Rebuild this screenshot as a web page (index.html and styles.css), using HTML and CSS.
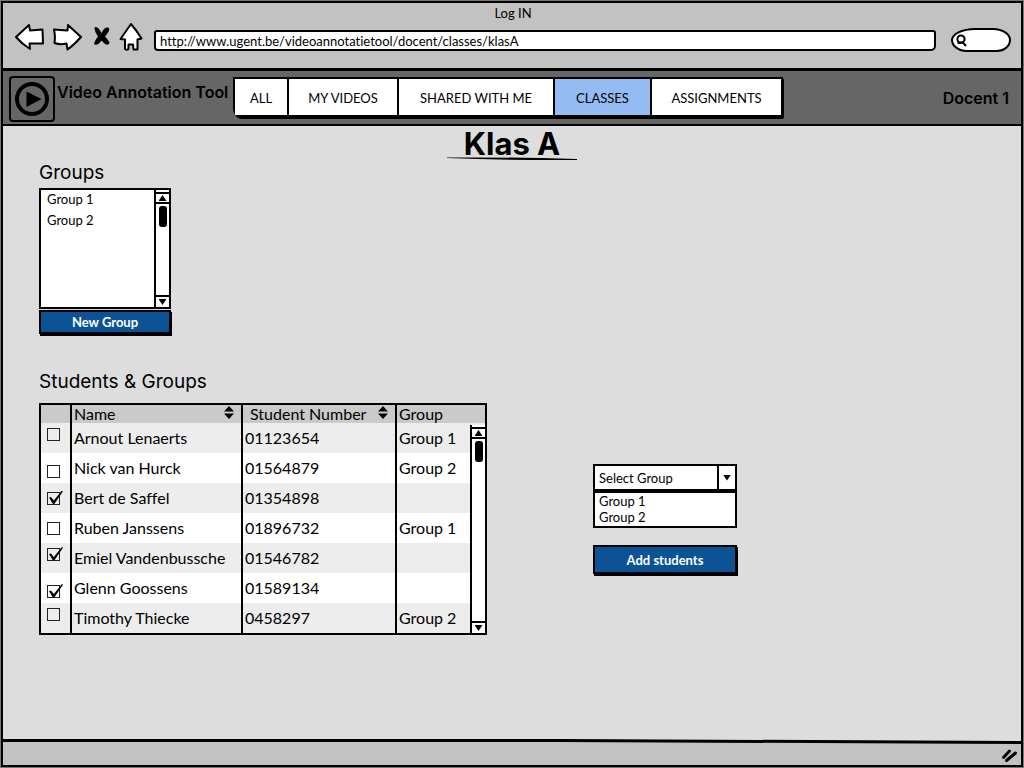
FILE: index.html
```html
<!DOCTYPE html>
<html lang="en">
<head>
<meta charset="utf-8">
<meta name="viewport" content="width=device-width, initial-scale=1">
<title>Log IN</title>
<link rel="stylesheet" href="styles.css">
</head>
<body>
<div class="window">
  <header class="chrome">
    <div class="chrome-title">Log IN</div>
    <div class="chrome-bar">
      <div class="chrome-buttons">
        <button type="button" aria-label="Back"><svg width="30" height="28" viewBox="0 0 30 28"><path d="M1 14 L14 2 L15 7.500 L27.500 6.500 L28 20.500 L14.500 20.500 L15 26 Q7 21 1 14Z"/></svg></button>
        <button type="button" aria-label="Forward"><svg width="30" height="28" viewBox="0 0 30 28"><path d="M28 14 L15 2 L14.500 7.500 L1 6.500 Q2.500 13 1.500 20 Q7 22 13.500 20.500 L14.500 26.500 Q21 22 28 14Z"/></svg></button>
        <button type="button" aria-label="Stop"><svg width="20" height="24" viewBox="0 0 20 24"><path class="cross" d="M4 2 Q7 1 10.500 8 Q14 1 18 3 Q19.500 5 14 11.500 Q19 17 18.500 18 Q17 21 14 19 L10.500 15.500 Q6.500 21 3.500 19.500 Q2 18 7 11.500 Q2 4 4 2Z"/></svg></button>
        <button type="button" aria-label="Home"><svg width="24" height="30" viewBox="0 0 24 30"><path d="M12 2 L1.500 17 L6 17.500 L6 27 Q8 28.500 9.500 27 L9.500 22.500 L14 22.500 L14.500 27.500 L18.500 27.500 L18.500 17.500 L22.500 16.500 Q18 9 12 2Z"/></svg></button>
      </div>
      <input class="address" type="text" aria-label="Address" value="http://www.ugent.be/videoannotatietool/docent/classes/klasA">
      <label class="search">
        <svg width="13" height="13" viewBox="0 0 13 13"><circle cx="6" cy="5" r="3.600"/><path d="M2.500 9 L8 8.500 L11 12"/></svg>
        <input type="search" aria-label="Search">
      </label>
    </div>
  </header>

  <div class="navbar">
    <svg class="logo" width="46" height="46" viewBox="0 0 46 46"><rect x="1" y="1" width="44" height="44" rx="3"/><circle cx="23" cy="23" r="15"/><path d="M17.500 15.500 L32.500 23 L17.500 31Z"/></svg>
    <div class="brand">Video Annotation Tool</div>
    <nav class="tabs">
      <a class="tab tab-all" href="#">ALL</a>
      <a class="tab tab-videos" href="#">MY VIDEOS</a>
      <a class="tab tab-shared" href="#">SHARED WITH ME</a>
      <a class="tab tab-classes active" href="#" aria-current="page">CLASSES</a>
      <a class="tab tab-assign" href="#">ASSIGNMENTS</a>
    </nav>
    <div class="user">Docent 1</div>
  </div>

  <main class="content">
    <div class="heading">
      <h1>Klas A</h1>
      <svg width="130" height="4" viewBox="0 0 130 4"><path d="M0 0.500 Q60 0 130 2 L130 3 Q60 3.500 0 1Z"/></svg>
    </div>

    <section class="groups">
      <h2><label for="groups">Groups</label></h2>
      <div class="listbox">
        <select id="groups" multiple size="5">
          <option>Group 1</option>
          <option>Group 2</option>
        </select>
        <div class="scroll"><span class="arrow"><i class="up"></i></span><span class="thumb"></span><span class="arrow end"><i class="down"></i></span></div>
      </div>
      <button class="btn" type="button">New Group</button>
    </section>

    <div class="columns">
      <section class="students">
        <h2>Students &amp; Groups</h2>
        <div class="grid-box">
          <table>
            <colgroup><col class="c-check"><col class="c-name"><col class="c-number"><col></colgroup>
            <thead>
              <tr>
                <th></th>
                <th><span class="sortable">Name <svg width="10" height="13" viewBox="0 0 10 13"><path d="M5 0 L10 5.500 L0 5.500Z M0 7.500 L10 7.500 L5 13Z"/></svg></span></th>
                <th><span class="sortable inset">Student Number <svg width="10" height="13" viewBox="0 0 10 13"><path d="M5 0 L10 5.500 L0 5.500Z M0 7.500 L10 7.500 L5 13Z"/></svg></span></th>
                <th>Group</th>
              </tr>
            </thead>
            <tbody>
              <tr><td class="high"><input type="checkbox" aria-label="Arnout Lenaerts"></td><td>Arnout Lenaerts</td><td>01123654</td><td>Group 1</td></tr>
              <tr><td class="low"><input type="checkbox" aria-label="Nick van Hurck"></td><td>Nick van Hurck</td><td>01564879</td><td>Group 2</td></tr>
              <tr><td><input type="checkbox" checked aria-label="Bert de Saffel"></td><td>Bert de Saffel</td><td>01354898</td><td></td></tr>
              <tr><td><input type="checkbox" aria-label="Ruben Janssens"></td><td>Ruben Janssens</td><td>01896732</td><td>Group 1</td></tr>
              <tr><td class="high"><input type="checkbox" checked aria-label="Emiel Vandenbussche"></td><td>Emiel Vandenbussche</td><td>01546782</td><td></td></tr>
              <tr><td class="low"><input type="checkbox" checked aria-label="Glenn Goossens"></td><td>Glenn Goossens</td><td>01589134</td><td></td></tr>
              <tr><td class="high"><input type="checkbox" aria-label="Timothy Thiecke"></td><td>Timothy Thiecke</td><td>0458297</td><td>Group 2</td></tr>
            </tbody>
          </table>
          <div class="scroll over"><span class="arrow"><i class="up"></i></span><span class="thumb"></span><span class="arrow end"><i class="down"></i></span></div>
        </div>
      </section>

      <section class="assign">
        <div class="combo">
          <select aria-label="Select Group"><option>Select Group</option></select>
          <span class="combo-arrow"><i class="down"></i></span>
        </div>
        <ul class="options" role="listbox" aria-label="Groups">
          <li role="option">Group 1</li>
          <li role="option">Group 2</li>
        </ul>
        <button class="btn large" type="button">Add students</button>
      </section>
    </div>
  </main>

  <footer class="status">
    <svg class="rule" height="5" viewBox="0 0 1018 5" preserveAspectRatio="none"><path class="below" d="M0 1 L560 1 L1018 4 L1018 5 L0 5Z"/><path class="ink" d="M0 0 L560 0 L1018 2 L1018 5 L560 3 L0 3Z"/></svg>
    <svg class="grip" width="18" height="15" viewBox="0 0 18 15"><path d="M2.500 9.500 L8.500 3 M5.500 12.500 L14.500 5"/></svg>
  </footer>
</div>
</body>
</html>
```

FILE: styles.css
```css
* { box-sizing: border-box; }

body {
  margin: 0;
  padding: 1px;
  background: #777;
  color: #000;
  font: 13px/16px Lato, "Open Sans", sans-serif;
  font-variant-ligatures: none;
}

button, input, select { font: inherit; font-variant-ligatures: none; color: inherit; margin: 0; }
svg { display: block; }

.window {
  display: flex;
  flex-direction: column;
  min-height: calc(100vh - 2px);
  border: 2px solid #000;
  background: #ddd;
}

/* Browser chrome */
.chrome {
  padding: 2px 10px 14px 12px;
  background: #c2c2c2;
  border-bottom: 3px solid #000;
}
.chrome-title { text-align: center; line-height: 17px; }
.chrome-bar { display: flex; align-items: center; height: 32px; }
.chrome-buttons { display: flex; align-items: center; gap: 8px; width: 139px; padding-bottom: 2px; }
.chrome-buttons button { padding: 0; border: 0; background: none; }
.chrome-buttons svg { fill: #fff; stroke: #000; stroke-width: 2; stroke-linejoin: round; }
.chrome-buttons .cross { fill: #000; stroke: none; }
.address {
  flex: 1;
  min-width: 0;
  height: 21px;
  margin: 5px 15px 0 0;
  padding: 0 4px;
  border: 2px solid #000;
  border-radius: 3px 3px 5px 4px;
  background: #fff;
}
.search {
  display: flex;
  align-items: center;
  width: 60px;
  height: 24px;
  margin-top: 4px;
  padding-left: 2px;
  border: 2px solid #000;
  border-radius: 24px 18px 14px 16px / 12px;
  background: #fff;
}
.search svg { flex: none; fill: none; stroke: #000; stroke-width: 2; }
.search input { width: 36px; padding: 0; border: 0; outline: 0; background: none; appearance: none; }

/* Navigation */
.navbar {
  display: flex;
  align-items: center;
  padding: 5px 12px 2px 6px;
  background: #666;
  border-bottom: 2px solid #000;
  font-family: Inter, Lato, sans-serif;
  font-size: 16px;
  font-weight: 600;
}
.logo { flex: none; fill: none; stroke: #000; stroke-width: 2; }
.logo circle { stroke-width: 4; }
.logo path { fill: #000; stroke: none; }
.brand { width: 178px; padding-left: 2px; margin-bottom: 14px; white-space: nowrap; }
.tabs {
  display: flex;
  margin-bottom: 4px;
  border: 2px solid #000;
  border-radius: 0 0 2px 8px;
  box-shadow: 1px 2px 0 #000;
  font-family: Lato, "Open Sans", sans-serif;
  font-size: 13px;
  font-weight: 400;
}
.tab {
  padding: 11px 0 9px;
  border-right: 2px solid #000;
  background: #fff;
  color: #000;
  text-align: center;
  text-decoration: none;
}
.tab:last-child { border-right: 0; }
.tab.active { background: #94bbf2; }
.tab-all { width: 54px; }
.tab-videos { width: 110px; }
.tab-shared { width: 156px; }
.tab-classes { width: 97px; }
.tab-assign { width: 129px; }
.user { margin: 0 0 3px auto; }

/* Page */
.content { flex: 1; padding: 0 36px; }
.heading { display: flex; flex-direction: column; align-items: center; }
h1, h2 { margin: 0; font-family: Inter, Lato, sans-serif; }
h1 { margin-bottom: -5px; font-size: 31px; font-weight: 700; line-height: 36px; }
h2 { padding-bottom: 3px; font-size: 19px; font-weight: 400; line-height: 24px; }

.groups { width: 132px; }
.listbox { display: flex; height: 121px; border: 2px solid #000; background: #fff; }
.listbox select { flex: 1; min-width: 0; padding: 0; border: 0; outline: 0; overflow: hidden; background: none; appearance: none; }
.listbox option { padding: 1px 6px 4px; min-height: 21px; line-height: 16px; }

.scroll {
  display: flex;
  flex-direction: column;
  width: 15px;
  padding-top: 2px;
  border-left: 2px solid #000;
  background: #fff;
}
.arrow { display: grid; place-items: center; height: 12px; border: solid #000; border-width: 2px 0; }
.arrow.end { margin-top: auto; border-bottom: 0; }
.thumb { width: 8px; height: 21px; margin: 2px 0 0 3px; border-radius: 3px; background: #000; }
.up, .down { width: 8px; height: 6px; background: #000; }
.up { clip-path: polygon(50% 0, 100% 100%, 0 100%); }
.down { clip-path: polygon(0 0, 100% 0, 50% 100%); }

.btn {
  display: block;
  width: 100%;
  height: 24px;
  margin-top: 1px;
  padding: 0;
  border: 2px solid #000;
  background: #0b5394;
  box-shadow: 1px 2px 0 #000;
  color: #fff;
  font-weight: 700;
}
.btn.large { height: 29px; margin-top: 17px; }

.columns { display: flex; align-items: flex-start; gap: 106px; padding-top: 36px; }
.students { flex: 0 1 448px; }
.students h2 { padding-bottom: 9px; }
.grid-box { position: relative; border: 2px solid #000; font-size: 16px; }
table { width: 100%; table-layout: fixed; border-collapse: collapse; line-height: 18px; }
.c-check { width: 30px; }
.c-name { width: 171px; }
.c-number { width: 154px; }
th { height: 18px; padding: 0 2px; background: #cacaca; font-weight: 400; text-align: left; }
td { height: 30px; padding: 0 2px; background: #fff; }
th + th, td + td { border-left: 2px solid #000; }
tbody tr:nth-child(odd) td { background: #ededed; }
td:first-child { padding: 0 0 0 6px; line-height: 0; }
td.high { vertical-align: top; padding-top: 5px; }
td.low { vertical-align: bottom; padding-bottom: 5px; }
.sortable { display: flex; align-items: center; justify-content: space-between; padding-right: 5px; }
.sortable svg { margin-bottom: 4px; }
.inset { padding-left: 5px; }
.scroll.over { position: absolute; top: 20px; right: 0; bottom: 0; }

input[type="checkbox"] {
  position: relative;
  width: 13px;
  height: 13px;
  border: 1px solid #222;
  appearance: none;
  vertical-align: middle;
}
input[type="checkbox"]:checked::after {
  content: "";
  position: absolute;
  left: 1px;
  top: -2px;
  width: 14px;
  height: 14px;
  background: #000;
  clip-path: polygon(0 50%, 14% 46%, 34% 72%, 92% 0, 100% 6%, 38% 96%, 28% 96%);
}

.assign { flex: 0 1 144px; padding-top: 94px; }
.combo { display: flex; height: 27px; border: 2px solid #000; background: #fff; }
.combo select { flex: 1; min-width: 0; padding: 0 4px; border: 0; outline: 0; background: none; appearance: none; }
.combo-arrow { display: grid; place-items: center; width: 18px; border-left: 2px solid #000; }
.options { margin: 0; padding: 0 4px 1px; border: 2px solid #000; background: #fff; list-style: none; }

/* Status bar */
.status { background: #c2c2c2; }
.rule { width: 100%; background: #ddd; }
.rule .below { fill: #c2c2c2; }
.grip { margin: 4px 2px 2px auto; fill: none; stroke: #000; stroke-width: 3; stroke-linecap: round; }
```
